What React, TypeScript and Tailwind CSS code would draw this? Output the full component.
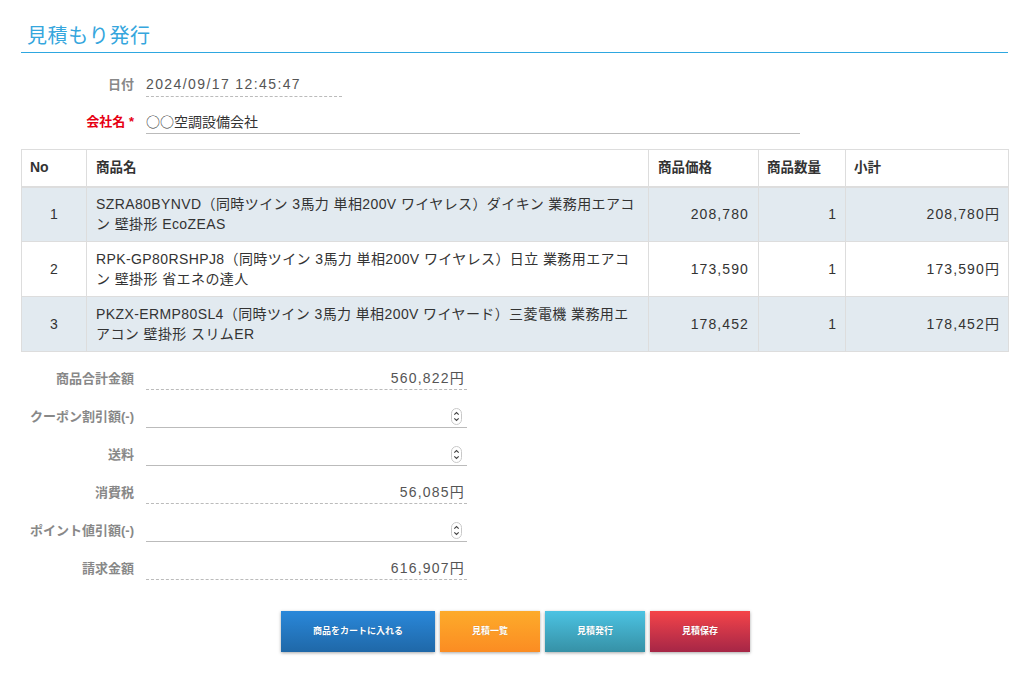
import React from "react";

const font = { fontFamily: '"Liberation Sans", "Noto Sans CJK JP", sans-serif' };

function Spinner() {
  return (
    <svg width="11" height="17" viewBox="0 0 11 17" className="shrink-0">
      <rect x="0.5" y="0.5" width="10" height="16" rx="5" fill="#fff" stroke="#c8c8c8" />
      <path d="M3.3 6.6 L5.5 4.5 L7.7 6.6" fill="none" stroke="#444" strokeWidth="1.1" />
      <path d="M3.3 10.4 L5.5 12.5 L7.7 10.4" fill="none" stroke="#444" strokeWidth="1.1" />
    </svg>
  );
}

const rows = [
  {
    no: 1,
    name: ["SZRA80BYNVD（同時ツイン 3馬力 単相200V ワイヤレス）ダイキン 業務用エアコ", "ン 壁掛形 EcoZEAS"],
    price: "208,780",
    qty: 1,
    sub: "208,780円",
    bg: "bg-[#e2eaf0]",
  },
  {
    no: 2,
    name: ["RPK-GP80RSHPJ8（同時ツイン 3馬力 単相200V ワイヤレス）日立 業務用エアコ", "ン 壁掛形 省エネの達人"],
    price: "173,590",
    qty: 1,
    sub: "173,590円",
    bg: "bg-white",
  },
  {
    no: 3,
    name: ["PKZX-ERMP80SL4（同時ツイン 3馬力 単相200V ワイヤード）三菱電機 業務用エ", "アコン 壁掛形 スリムER"],
    price: "178,452",
    qty: 1,
    sub: "178,452円",
    bg: "bg-[#e2eaf0]",
  },
];

const summary: { label: string; value?: string; input?: boolean }[] = [
  { label: "商品合計金額", value: "560,822円" },
  { label: "クーポン割引額(-)", input: true },
  { label: "送料", input: true },
  { label: "消費税", value: "56,085円" },
  { label: "ポイント値引額(-)", input: true },
  { label: "請求金額", value: "616,907円" },
];

export default function App() {
  return (
    <div className="w-[1030px] h-[674px] bg-white text-[#333]" style={font}>
      <div className="pl-[21px] pr-[22px] pt-[20px]">
        <div className="pl-[6px] h-[32px] flex items-center">
          <h1 className="text-[20px] leading-[28px] text-[#35a6dd] font-normal tracking-[0.6px]">見積もり発行</h1>
        </div>
        <div className="h-[1px] bg-[#2ea7e0]" />

        <div className="mt-[21px] flex items-end h-[23px]">
          <div className="w-[113px] text-right text-[13px] font-bold text-[#888] pb-[3px]">日付</div>
          <div className="ml-[12px] w-[196px] border-b border-dashed border-[#bbb] text-[14px] text-[#555] h-[23px] leading-[20px] tracking-[1.4px]">
            2024/09/17 12:45:47
          </div>
        </div>

        <div className="mt-[14px] flex items-end h-[23px]">
          <div className="w-[113px] text-right text-[13px] font-bold text-[#e60012] pb-[3px]">会社名 *</div>
          <div className="ml-[12px] w-[654px] border-b border-[#bbb] text-[14px] text-[#333] h-[23px] leading-[20px]">
            <span className="font-['Noto_Sans_CJK_JP',sans-serif]">○○</span>空調設備会社
          </div>
        </div>

        <table className="mt-[15px] w-[987px] border-collapse table-fixed text-[14px]">
          <colgroup>
            <col className="w-[65px]" />
            <col className="w-[562px]" />
            <col className="w-[110px]" />
            <col className="w-[87px]" />
            <col className="w-[163px]" />
          </colgroup>
          <thead>
            <tr className="h-[37px] bg-white">
              <th className="border border-[#ddd] border-b-2 text-left pl-[8px] font-bold text-[14px]">No</th>
              <th className="border border-[#ddd] border-b-2 text-left pl-[9px] font-bold text-[13.5px]">商品名</th>
              <th className="border border-[#ddd] border-b-2 text-left pl-[9px] font-bold text-[13.5px]">商品価格</th>
              <th className="border border-[#ddd] border-b-2 text-left pl-[8px] font-bold text-[13.5px]">商品数量</th>
              <th className="border border-[#ddd] border-b-2 text-left pl-[8px] font-bold text-[13.5px]">小計</th>
            </tr>
          </thead>
          <tbody>
            {rows.map((r) => (
              <tr key={r.no} className={`h-[55px] ${r.bg}`}>
                <td className="border border-[#ddd] text-center">{r.no}</td>
                <td className="border border-[#ddd] pl-[9px] leading-[20px] tracking-[0.4px] whitespace-nowrap">
                  {r.name[0]}
                  <br />
                  {r.name[1]}
                </td>
                <td className="border border-[#ddd] text-right pr-[9px] tracking-[1.1px]">{r.price}</td>
                <td className="border border-[#ddd] text-right pr-[9px]">{r.qty}</td>
                <td className="border border-[#ddd] text-right pr-[8px] tracking-[1.1px]">{r.sub}</td>
              </tr>
            ))}
          </tbody>
        </table>

        <div className="mt-[14px] flex flex-col gap-[14px]">
          {summary.map((s) => (
            <div key={s.label} className="flex items-end h-[24px]">
              <div className="w-[113px] text-right text-[13px] font-bold text-[#888] pb-[2px] whitespace-nowrap">
                {s.label}
              </div>
              <div
                className={`ml-[12px] w-[321px] h-[24px] flex items-center justify-end text-[14px] text-[#555] border-b tracking-[1.2px] pt-[1px] ${
                  s.input ? "border-solid border-[#bbb] pr-[5px]" : "border-dashed border-[#bbb] pr-[2px]"
                }`}
              >
                {s.input ? <Spinner /> : s.value}
              </div>
            </div>
          ))}
        </div>

        <div className="mt-[31px] flex gap-[5px] pl-[260px]">
          {[
            { t: "商品をカートに入れる", w: "w-[154px]", c: "bg-gradient-to-b from-[#2a88da] to-[#1f68a8]" },
            { t: "見積一覧", w: "w-[100px]", c: "bg-gradient-to-b from-[#fdab2b] to-[#fb8c22]" },
            { t: "見積発行", w: "w-[100px]", c: "bg-gradient-to-b from-[#4cc3e3] to-[#3691a6]" },
            { t: "見積保存", w: "w-[100px]", c: "bg-gradient-to-b from-[#f54448] to-[#a62646]" },
          ].map((b) => (
            <button
              key={b.t}
              className={`${b.w} h-[41px] ${b.c} text-white text-[9px] font-bold shadow-[0_1px_3px_rgba(0,0,0,0.35)] [text-shadow:0_0_1px_rgba(0,0,0,0.2)]`}
            >
              {b.t}
            </button>
          ))}
        </div>
      </div>
    </div>
  );
}
